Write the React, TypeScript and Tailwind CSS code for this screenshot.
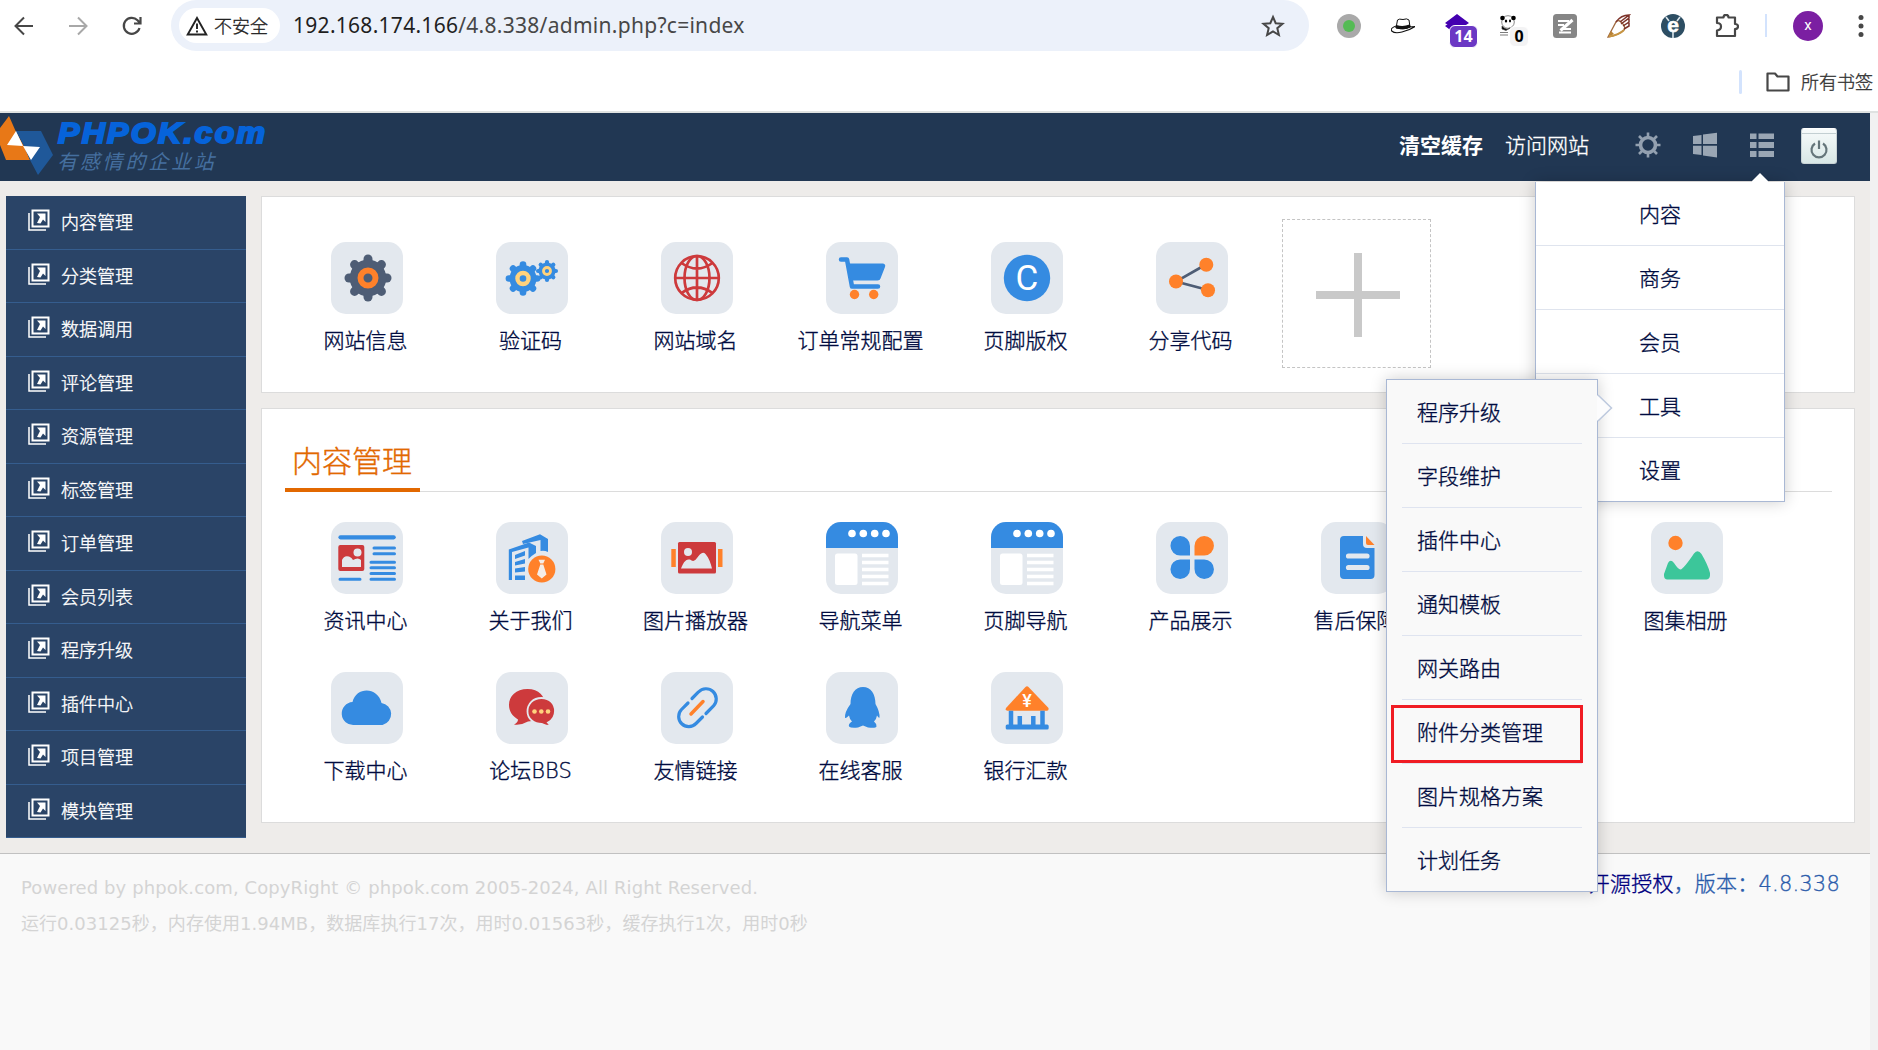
import React from "react";

const UI = "font-['DejaVu_Sans','Noto_Sans_CJK_SC',sans-serif]";
const THIN = "font-light [-webkit-text-stroke:0.35px_currentColor]";
const BLUE = "#358be1";
const RED = "#cd3a3c";
const ORANGE = "#ff812a";
const TILE = "#e3e8ee";

function Gear({ x, y, r, color, ring }: { x: number; y: number; r: number; color: string; ring: string }) {
  return (
    <g transform={`translate(${x} ${y}) scale(${r / 23})`}>
      {[0, 45, 90, 135].map((a) => (
        <path key={a} d="M0-19V19" stroke={color} strokeWidth="9" strokeLinecap="round" transform={`rotate(${a})`} />
      ))}
      <circle r="18.3" fill={color} />
      <circle r="7.5" fill={color} stroke={ring} strokeWidth="6" />
    </g>
  );
}

const browserWindow = (
  <>
    <path d="M0 0H72V26H0z" fill={BLUE} />
    {[26, 37.3, 48.7, 60].map((x) => (
      <circle key={x} cx={x} cy="11.5" r="3.8" fill="#fff" />
    ))}
    <rect x="9" y="31.5" width="22.5" height="31.5" rx="2.5" fill="#fff" />
    <path d="M36 33.5H62.5M36 40.5H62.5M36 47.5H62.5M36 54.5H62.5M36 61.5H62.5" stroke="#fff" strokeWidth="3.4" />
  </>
);

const art: Record<string, React.ReactNode> = {
  gear: <Gear x={37} y={36} r={23} color="#4e5d75" ring={ORANGE} />,
  gears: (
    <>
      <Gear x={27} y={36.5} r={17} color={BLUE} ring="#ffd27d" />
      <Gear x={51} y={29} r={10.8} color={BLUE} ring="#ffd27d" />
    </>
  ),
  globe: (
    <g fill="none" stroke={RED} strokeWidth="2.7">
      <circle cx="36" cy="36" r="21.8" />
      <ellipse cx="36" cy="36" rx="12.5" ry="22" />
      <path d="M36 14V58M14 36H58M20.5 21Q36 32 51.5 21M20.5 51Q36 40 51.5 51" />
    </g>
  ),
  cart: (
    <>
      <path d="M15 17.5H21L26 44.5H52" fill="none" stroke={BLUE} strokeWidth="4.5" strokeLinecap="round" strokeLinejoin="round" />
      <path d="M22 21.5H57Q60 22 59 25L54.5 36.5Q54 38.5 51.5 38.5H27V43H25z" fill={BLUE} />
      <circle cx="28.5" cy="52.5" r="4.7" fill={ORANGE} />
      <circle cx="47.7" cy="52.5" r="4.7" fill={ORANGE} />
    </>
  ),
  copyright: (
    <>
      <circle cx="36" cy="36" r="23.2" fill={BLUE} />
      <text x="36" y="48.3" textAnchor="middle" fill="#fff" fontFamily="Roboto" fontSize="35">C</text>
    </>
  ),
  share: (
    <>
      <path d="M50 22.5L20 39.5L52 48" stroke="#4e5d75" strokeWidth="2.6" fill="none" />
      <circle cx="20" cy="39.5" r="7" fill={ORANGE} />
      <circle cx="50.3" cy="22.7" r="7" fill={ORANGE} />
      <circle cx="52" cy="48.2" r="7" fill={ORANGE} />
    </>
  ),
  news: (
    <>
      <path d="M9.5 15.3H62.7" stroke={BLUE} strokeWidth="4.2" strokeLinecap="round" />
      <path d="M43 26H63.5M43 31.7H63.5M40 40.2H63.5M40 45.8H63.5M40 51.4H63.5M40 57.2H63.5M9 57.2H29" stroke={BLUE} strokeWidth="3" strokeLinecap="round" />
      <rect x="7.3" y="23" width="26" height="26" rx="2" fill={RED} />
      <circle cx="26.5" cy="30.5" r="4" fill={TILE} />
      <path d="M11 45V38Q13 33 18 34.5Q21 35.5 22 38Q27 35 30 38V45z" fill={TILE} />
    </>
  ),
  about: (
    <>
      <path d="M26 19L44 12.3L52 17V30Q48 28 44.5 29V18L27 22z" fill={BLUE} />
      <path d="M12.8 27.5L33 20.5L40 24V31Q35 34 32.5 37V25.5L16 30V58H12.8z" fill={BLUE} />
      <path d="M19 33L29 29V33.5L19 37zM19 40L29 37V41.5L19 43.5zM19 46.5L29 45V49.5L19 50.5zM19 53.5H29V58H19z" fill={BLUE} />
      <circle cx="45.8" cy="47" r="13.6" fill={ORANGE} />
      <path d="M42.5 37.8H49L47.3 41.5H44.3zM44.3 42.5H47.3L50.5 52.5L45.8 56.5L41 52.5z" fill="#f5ede7" />
    </>
  ),
  slider: (
    <>
      <rect x="17" y="20" width="38" height="31.5" rx="1.5" fill={RED} />
      <path d="M10.3 27H14.8V45H10.3zM57 27H61.5V45H57z" fill={ORANGE} />
      <circle cx="27" cy="30" r="4" fill={TILE} />
      <path d="M20 46.5C23 39 25 37.5 29 37.5Q33 41 36 36C39 31.5 42 29 44.5 32C48 36 50 42 51 46.5z" fill={TILE} />
    </>
  ),
  menu: browserWindow,
  petals: (
    <>
      <path d="M34 33.5H24.2A9.7 9.7 0 0 1 24.2 14A9.8 9.8 0 0 1 34 24z" fill={BLUE} />
      <path d="M38.5 33.5H48.2A9.7 9.7 0 0 0 48.2 14A9.8 9.8 0 0 0 38.5 24z" fill={ORANGE} />
      <path d="M34 37.5H24.2A9.7 9.7 0 0 0 24.2 57A9.8 9.8 0 0 0 34 47z" fill={BLUE} />
      <path d="M38.5 37.5H48.2A9.7 9.7 0 0 1 48.2 57A9.8 9.8 0 0 1 38.5 47z" fill={BLUE} />
    </>
  ),
  doc: (
    <>
      <path d="M23 14H42V22Q42 26 46 26H53.5V53Q53.5 57 49.5 57H23Q19 57 19 53V18Q19 14 23 14z" fill={BLUE} />
      <path d="M45 14L53.5 23H47Q45 23 45 21z" fill={ORANGE} />
      <path d="M27.5 34H46M27.5 45.5H46" stroke={TILE} strokeWidth="5.2" strokeLinecap="round" />
    </>
  ),
  album: (
    <>
      <circle cx="24.5" cy="21" r="7.2" fill={ORANGE} />
      <path d="M16 57.5Q12.5 57 13 52L17 41Q19.5 36.5 23 41Q27 47 29.5 47.5Q32.5 47 43 31.5Q47 27 50.5 32Q57 43 59 51Q59.5 57 55.5 57.5z" fill="#3cc69a" />
    </>
  ),
  cloud: <path d="M22 53A11.4 11.4 0 0 1 20.5 30C24.5 14 46 15 49.5 31A11.2 11.2 0 0 1 50.5 53z" fill={BLUE} transform="translate(1 0)" />,
  chat: (
    <>
      <path d="M31.5 17C20 17 13 24 13 33C13 39 16 44 22 47.5Q22 50.5 18 52.5Q25 53.5 32 49.5C43 49 49 42 49 33C49 24 43 17 31.5 17z" fill={RED} />
      <path d="M45.5 26C37 26 31.5 32 31.5 39.5C31.5 47 38 52 46 52Q50 54 54.5 54Q54 52.5 52 50.5C57 48 59 44 59 39C59 32 54 26 45.5 26z" fill={RED} stroke={TILE} strokeWidth="1.8" />
      <circle cx="38.5" cy="39.5" r="2.3" fill="#ffd27d" />
      <circle cx="45.3" cy="39.5" r="2.3" fill="#ffd27d" />
      <circle cx="52" cy="39.5" r="2.3" fill="#ffd27d" />
    </>
  ),
  link: (
    <g fill="none" strokeWidth="3.2" strokeLinecap="round">
      <path d="M31 26.5L37.5 20A10 10 0 0 1 52.5 34L45 41.5M41.5 45L35 51.5A10 10 0 0 1 20.5 37.5L27 31" stroke={BLUE} />
      <path d="M30 42L42 29.5" stroke={ORANGE} strokeWidth="3.5" />
    </g>
  ),
  penguin: (
    <path d="M37 15C29 15 24.5 22 24.5 32Q18.5 40 19 46Q20 46.5 23 43.5Q23.5 47 26 49.5Q22 52 23 54.5Q25 56.5 32 55.5L37 53.5L42 55.5Q50 56.5 50.5 54.5Q51 52 48 49.5Q50.5 47 51 43.5Q53 46.5 53.5 45.5Q54 40 49.5 32C49.5 22 45 15 37 15z" fill={BLUE} />
  ),
  bank: (
    <>
      <path d="M34.5 15Q36 13.5 37.5 15L57.5 36Q58 38.7 56 38.7H16.5Q14 38.7 15 36z" fill={ORANGE} />
      <path d="M20 38.7V54M51.5 38.7V54M28.8 44V54M42.3 44V54" stroke={BLUE} strokeWidth="4.5" />
      <rect x="14.7" y="52.5" width="43" height="5" rx="1.5" fill={BLUE} />
      <text x="36" y="34.7" textAnchor="middle" fill="#fff" fontFamily="Roboto" fontWeight="500" fontSize="18">¥</text>
    </>
  ),
};

function Tile({ icon, label }: { icon: string; label: string }) {
  return (
    <div className="flex h-[150px] w-[150px] flex-col items-center pt-[23px]">
      <div className="size-[72px] overflow-hidden rounded-[15px] bg-[#e3e8ee]">
        <svg viewBox="0 0 72 72" className="size-full">{art[icon]}</svg>
      </div>
      <div className={`mt-[13px] mr-[3px] h-7 text-[21px] leading-7 whitespace-nowrap ${THIN}`}>{label}</div>
    </div>
  );
}

const shortcuts = [
  ["gear", "网站信息"], ["gears", "验证码"], ["globe", "网站域名"], ["cart", "订单常规配置"], ["copyright", "页脚版权"], ["share", "分享代码"],
];
const modules = [
  ["news", "资讯中心"], ["about", "关于我们"], ["slider", "图片播放器"], ["menu", "导航菜单"], ["menu", "页脚导航"], ["petals", "产品展示"], ["doc", "售后保障"], ["", ""], ["album", "图集相册"],
  ["cloud", "下载中心"], ["chat", "论坛BBS"], ["link", "友情链接"], ["penguin", "在线客服"], ["bank", "银行汇款"],
];
const side = ["内容管理", "分类管理", "数据调用", "评论管理", "资源管理", "标签管理", "订单管理", "会员列表", "程序升级", "插件中心", "项目管理", "模块管理"];
const topMenu = ["内容", "商务", "会员", "工具", "设置"];
const tools = ["程序升级", "字段维护", "插件中心", "通知模板", "网关路由", "附件分类管理", "图片规格方案", "计划任务"];

function Extensions() {
  return (
    <div className="ml-[28px] flex items-center gap-[30px]">
      <svg className="size-6" viewBox="0 0 24 24"><circle cx="12" cy="12" r="12" fill="#a9a9a9" /><circle cx="12" cy="12" r="6" fill="#55bb55" /></svg>
      <svg className="size-6" viewBox="0 0 24 24">
        <path d="M5 12Q-1 14 .7 17Q4 20 11 18Q19 16 24 12.5Q21 12.5 18 13" fill="#fff" stroke="#111" strokeWidth="1.1" />
        <path d="M5 14L6.5 6Q8 4.5 12 5.5Q16 4 18 6L19 13Q14 16 5 14z" fill="#fff" stroke="#111" strokeWidth="1" />
        <path d="M5.5 11Q12 13 18.5 10.5L20 13Q13 17 4.5 14z" fill="#111" />
      </svg>
      <div className="relative size-6">
        <svg className="size-6" viewBox="0 0 24 24"><path d="M12 0L24 9L12 17L0 9zM0 12L3 10L12 17V21z" fill="#4400b0" /></svg>
        <span className="absolute top-[11px] left-[4px] flex h-[23px] w-[29px] items-center justify-center rounded-md border border-white bg-[#6b38c4] font-['Open_Sans',sans-serif] text-[16px] font-bold text-white">14</span>
      </div>
      <div className="relative size-6">
        <svg className="size-6" viewBox="0 0 24 24">
          <circle cx="9" cy="8" r="6.3" fill="#fff" stroke="#555" strokeWidth=".7" />
          <circle cx="3.5" cy="4" r="2.3" /><circle cx="14.5" cy="4" r="2.3" />
          <ellipse cx="7" cy="7" rx="1.2" ry="1.6" /><ellipse cx="11" cy="7" rx="1" ry="1.4" />
          <path d="M3 12Q7 17 11 14L7 16.5L3 15zM1 18.5H9M1 21H9" stroke="#444" strokeWidth=".7" />
        </svg>
        <span className="absolute top-[12px] left-[10px] flex h-[21px] w-[20px] items-center justify-center rounded-md border border-white bg-[#f3f3f4] font-['Open_Sans',sans-serif] text-[16px] font-bold text-black">0</span>
      </div>
      <svg className="size-6" viewBox="0 0 24 24"><rect width="24" height="24" rx="3.5" fill="#868686" /><path d="M5 7H16M5 11H11M6 18.5H18M10 15H18" stroke="#fff" strokeWidth="2" /><path d="M19.5 6L7.5 16.500" stroke="#fff" strokeWidth="3" /></svg>
      <svg className="size-6" viewBox="0 0 24 24">
        <path d="M1 23L9 8Q12 5 15 9Q19 12 17 16Q12 21 1 23z" fill="#fff" stroke="#a06a40" strokeWidth="1.3" />
        <path d="M1 23L4 17L7 20z" fill="#b98236" /><path d="M2 22.5Q12 21 17 16" fill="none" stroke="#c79542" strokeWidth="1.8" />
        <path d="M9 8Q14 1 22 1L13 8M22 1V4L14 10M22 5V8L16 12M22 9V12L17 15" stroke="#7d332a" strokeWidth="1.5" fill="none" />
      </svg>
      <svg className="size-6 overflow-visible" viewBox="0 0 24 24">
        <circle cx="12" cy="12" r="12" fill="#2d4e63" />
        <path d="M5 3L8 7M19 3L16 7M12 18V24" stroke="#dce6ec" strokeWidth="1.6" />
        <text x="12" y="17.7" textAnchor="middle" fill="#fff" stroke="#fff" strokeWidth=".6" fontFamily="Liberation Sans" fontWeight="700" fontSize="21">e</text>
      </svg>
      <svg className="size-6" viewBox="0 0 24 24" fill="none" stroke="#474747" strokeWidth="2.2">
        <path d="M2 3.5H8.5Q8.5 .8 11 .8T13.5 3.5H20V10Q23 10 23 12.5T20 15V22H2V16.5Q6 16 6 12.5T2 9z" strokeLinejoin="round" />
      </svg>
    </div>
  );
}

function Chrome() {
  return (
    <div className="h-[113px] border-b-2 border-[#dfe2e1] bg-white font-['Noto_Sans','Noto_Sans_CJK_SC',sans-serif]">
      <div className="flex h-[51px] items-center">
        <svg className="ml-[12px] size-6" viewBox="0 0 24 24" fill="none" stroke="#474747" strokeWidth="2"><path d="M21 12H4M12 3.5L3.5 12L12 20.5" /></svg>
        <svg className="ml-[30px] size-6" viewBox="0 0 24 24" fill="none" stroke="#a8a8a8" strokeWidth="2"><path d="M3 12H20M12 3.5L20.5 12L12 20.5" /></svg>
        <svg className="ml-[30px] size-6" viewBox="0 0 24 24" fill="none" stroke="#474747" strokeWidth="2.2"><path d="M19.5 14A8 8 0 1 1 17.5 6.2L20 9M20.5 3V9.5H14" /></svg>
        <div className="ml-[27px] flex h-full w-[1138px] items-center rounded-full bg-[#ecf1fa] pl-[8px]">
          <div className="flex h-[35px] w-[101px] items-center rounded-full bg-white pl-[7px]">
            <svg className="h-[20px] w-[22px]" viewBox="0 0 22 20" fill="none" stroke="#222" strokeWidth="1.9"><path d="M11 2L20.3 18.5H1.7zM11 7.5V13M11 14.5V16.5" /></svg>
            <span className={`mt-px ml-[6px] text-[18px] text-[#222] ${THIN}`}>不安全</span>
          </div>
          <div className="ml-[13px] w-[960px] text-[21px] tracking-[0.28px] whitespace-nowrap text-[#474747]"><span className="text-[#1f1f1f]">192.168.174.166</span>/4.8.338/admin.php?c=index</div>
          <svg className="ml-[8px] size-6" viewBox="0 0 24 24" fill="none" stroke="#474747" strokeWidth="2"><path d="M12 3L14.7 9.2L21.5 9.8L16.3 14.2L17.9 21L12 17.4L6.1 21L7.7 14.2L2.5 9.8L9.3 9.2z" /></svg>
        </div>
        <Extensions />
        <div className="ml-[26px] h-[23px] w-[2px] bg-[#d3e3fd]" />
        <div className="ml-[26px] flex size-[30px] items-center justify-center rounded-full bg-[#7b1fa2] font-['Roboto',sans-serif] text-[15px] text-white">x</div>
        <svg className="ml-[26px] h-[24px] w-[24px]" viewBox="0 0 24 24" fill="#474747"><circle cx="12" cy="3.5" r="2.5" /><circle cx="12" cy="12" r="2.5" /><circle cx="12" cy="20.5" r="2.5" /></svg>
      </div>
      <div className="mt-[13px] flex h-[36px] items-center justify-end pr-[5px]">
        <div className="h-[24px] w-[3px] rounded bg-[#d3e3fd]" />
        <svg className="ml-[24px] h-[20px] w-[24px]" viewBox="0 0 24 20" fill="none" stroke="#474747" strokeWidth="2.2" strokeLinejoin="round"><path d="M1.5 1.5H9L11.5 4.5H22.5V18.5H1.5z" /></svg>
        <span className={`ml-[11px] text-[18px] leading-9 text-[#333] ${THIN}`}>所有书签</span>
      </div>
    </div>
  );
}

function Logo() {
  return (
    <div className="flex h-[68px] w-[300px]">
      <svg className="h-[64px] w-[54px]" viewBox="0 0 54 64">
        <path d="M9 3L16 19L24 33L30 47H6L0 32V15z" fill="#e87817" />
        <path d="M16 18H41L53 42L38 62L30 47L24 33z" fill="#1f5899" />
        <path d="M16 18L7 32L23 33zM23 33L40 34L31 47z" fill="#fff" />
      </svg>
      <div className="ml-[4px] pt-[6px] whitespace-nowrap">
        <div className="origin-left scale-x-[1.07] font-['Liberation_Sans',sans-serif] text-[30px] leading-[28px] font-bold tracking-[2.1px] text-[#0663da] italic [-webkit-text-stroke:2px_#0663da]">PHPOK.com</div>
        <div className="mt-[3px] ml-[-1px] text-[20px] leading-[24px] tracking-[2.8px] text-[#456f9f] italic">有感情的企业站</div>
      </div>
    </div>
  );
}

function ToolsMenu() {
  return (
    <div className={`absolute top-[266px] left-[1386px] z-20 h-[513px] w-[212px] border border-[#a9b8d4] bg-[#f9f9f9] px-[15px] shadow-[0_0_15px_rgba(0,0,0,0.2)] ${THIN}`}>
      {tools.map((t, i) => (
        <div key={t} className={`h-[64px] pl-[15px] text-[21px] leading-[66px] ${i < tools.length - 1 ? "border-b border-[#dfe4f0]" : ""}`}>{t}</div>
      ))}
      <svg className="absolute top-[14px] left-[210px] h-[28px] w-[16px]" viewBox="0 0 16 28"><path d="M0 1L14.5 14L0 27z" fill="#fcfcfd" /><path d="M1 1L14.5 14L1 27" fill="none" stroke="#bdc9de" strokeWidth="1.5" /></svg>
      <div className="absolute top-[325px] left-[4px] h-[58px] w-[192px] border-3 border-[#f01c24]" />
    </div>
  );
}

function TopMenu() {
  return (
    <div className={`absolute top-[69px] left-[1535px] z-10 h-[320px] w-[250px] border border-t-0 border-[#a9b8d4] bg-white shadow-[0_0_15px_rgba(0,0,0,0.2)] ${THIN}`}>
      {topMenu.map((t, i) => (
        <div key={t} className={`h-[64px] text-center text-[21px] leading-[66px] ${i < 4 ? "border-b border-[#dfe4ee]" : ""}`}>{t}</div>
      ))}
      <svg className="absolute top-[-9px] left-[216px] h-[10px] w-[16px]" viewBox="0 0 16 10"><path d="M8 0L16 8V10H0V8z" fill="#fff" /></svg>
    </div>
  );
}

export default function App() {
  return (
    <div className="h-[1050px] w-[1878px] overflow-hidden bg-[#f1f1f1]">
      <Chrome />
      <div className={`relative h-[937px] w-[1870px] bg-[#eeecea] text-[#000b40] ${UI}`}>
        <header className="flex h-[68px] bg-[#213753] text-[21px] text-white">
          <Logo />
          <div className="flex h-[64px] flex-1 items-center justify-end pr-[33px]">
            <span className="mt-[3px] font-bold">清空缓存</span>
            <span className={`mt-[3px] ml-[22px] ${THIN}`}>访问网站</span>
            <svg className="ml-[46px] size-[26px]" viewBox="0 0 26 26" fill="none" stroke="#93a0b0" strokeWidth="3.6"><circle cx="13" cy="13" r="7.5" /><path d="M13 .5V6M13 20V25.5M.5 13H6M20 13H25.5M4 4L8 8M18 18L22 22M22 4L18 8M8 18L4 22" strokeWidth="2.6" /></svg>
            <svg className="ml-[31px] size-[26px]" viewBox="0 0 26 26" fill="#9aa6b4"><path d="M1 4L9.5 3V12H1zM11 2.6L25 .8V12H11zM1 13.8H9.5V23L1 22zM11 13.8H25V25.5L11 23.5z" /></svg>
            <svg className="ml-[31px] size-[26px]" viewBox="0 0 26 26" fill="#9aa6b4"><path d="M1 1.5H7.5V7H1zM9.5 1.5H25V7H9.5zM1 10H7.5V16H1zM9.5 10H25V16H9.5zM1 19H7.5V25H1zM9.5 19H25V25H9.5z" /></svg>
            <div className="mt-px ml-[26px] flex h-[36px] w-[36px] flex-col items-center rounded-[3px] border border-[#c9d3d6] border-t-white bg-gradient-to-b from-[#f8fbfb] to-[#d8e7e6]">
              <div className="h-[5px] w-full border-b border-[#c3cfd2]" />
              <svg className="mt-[5px] size-[20px]" viewBox="0 0 20 20" fill="none" stroke="#65757a" strokeWidth="2.2"><path d="M6 4.5A7.5 7.5 0 1 0 14 4.5M10 1.5V10" /></svg>
            </div>
          </div>
        </header>

        <div className="flex h-[672px] items-start pt-[15px] pl-[6px]">
          <nav className={`w-[240px] bg-[#2a4467] text-[18px] text-white ${THIN}`}>
            {side.map((s) => (
              <div key={s} className="flex h-[53.5px] items-center border-b border-[#355d8e] pl-[22px]">
                <svg className="mt-[-4px] size-[22px]" viewBox="0 0 22 22" fill="none" stroke="#fff">
                  <path d="M1 4V21H18" strokeWidth="1.5" /><path d="M4.5 1.5H20.5V17.5H4.5z" strokeWidth="2" />
                  <path d="M9 4.5H17.5V13L15 10.5L12.5 14.5L9 14L12 8z" fill="#fff" stroke="none" />
                </svg>
                <span className="mt-[2px] ml-[11px] leading-6">{s}</span>
              </div>
            ))}
          </nav>
          <main className="ml-[15px] flex w-[1594px] flex-col gap-[15px]">
            <section className="h-[197px] border border-[#dcdcdc] bg-white pt-[22px] pl-[30px]">
              <div className="flex gap-[15px]">
                {shortcuts.map(([i, l]) => <Tile key={l} icon={i} label={l} />)}
                <div className="flex size-[149px] items-center justify-center border border-dashed border-[#c4c4c4] pt-[2px] pl-[2px]">
                  <svg className="size-[84px]" viewBox="0 0 84 84"><path d="M42 0V84M0 42H84" stroke="#c9c9c9" strokeWidth="8" /></svg>
                </div>
              </div>
            </section>
            <section className="h-[415px] border border-[#dcdcdc] bg-white px-[23px] pt-[23px]">
              <div className="flex h-[60px] w-[1547px] border-b border-[#dcdcdc]">
                <h2 className={`h-[60px] w-[135px] border-b-4 border-[#e26800] pl-[7px] text-[30px] leading-[60px] whitespace-nowrap text-[#e26800] ${THIN}`}>内容管理</h2>
              </div>
              <div className="mt-[7px] ml-[7px] flex flex-wrap gap-x-[15px]">
                {modules.map(([i, l], n) => (i ? <Tile key={n} icon={i} label={l} /> : <div key={n} className="h-[150px] w-[150px]" />))}
              </div>
            </section>
          </main>
        </div>

        <footer className="flex h-[197px] justify-between border-t border-[#c1c1c1] bg-[#f9f9f9] pt-[14px] pr-[30px] pl-[21px]">
          <div className="pt-[2px] text-[18px] leading-9 whitespace-nowrap text-[#d4d4d4]">
            <div className="tracking-[0.1px]">Powered by phpok.com, CopyRight © phpok.com 2005-2024, All Right Reserved.</div>
            <div className="tracking-[0.04px]">运行0.03125秒，内存使用1.94MB，数据库执行17次，用时0.01563秒，缓存执行1次，用时0秒</div>
          </div>
          <div className={`text-[21px] leading-8 tracking-[0.2px] text-[#2b5cab] ${THIN}`}><span className="text-[#000080]">开源授权</span>，版本：4.8.338</div>
        </footer>
        <TopMenu />
        <ToolsMenu />
      </div>
    </div>
  );
}
